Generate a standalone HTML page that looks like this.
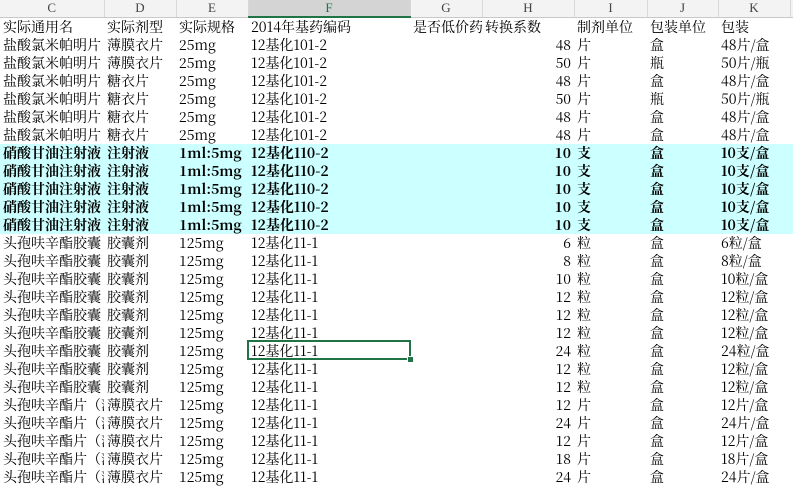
<!DOCTYPE html>
<html><head><meta charset="utf-8"><style>
body{margin:0;width:793px;height:485px;overflow:hidden;background:#fff;font-family:"Noto Serif CJK SC","WenQuanYi Zen Hei",serif;font-size:14px;color:#000}
table{border-collapse:collapse;table-layout:fixed;position:absolute;left:0;top:0;width:793px}
td{box-sizing:border-box;height:18px;padding:0 0 0 3px;white-space:nowrap;overflow:hidden;line-height:18px}
tr.h td{height:17px;background:#f3f3f3;text-align:center;font-size:13px;color:#444;border-right:1px solid #d8d8d8;border-bottom:1px solid #c8c8c8;padding:0;line-height:16px;font-family:"Liberation Serif",serif}
tr.h td.sel{background:#d4d4d4;border-bottom:2px solid #217346;color:#217346}
td.r{text-align:right;padding:0 3px 0 0}
tr.b td{background:#ccffff;font-weight:bold}
#sel{position:absolute;left:247px;top:340px;width:160px;height:16px;border:2px solid #217346}
#sel:after{content:"";position:absolute;right:-5px;bottom:-5px;width:5px;height:5px;background:#217346;border:1px solid #fff}
</style></head><body>
<table>
<colgroup><col style="width:104px"><col style="width:72px"><col style="width:72px"><col style="width:162px"><col style="width:72px"><col style="width:92px"><col style="width:73px"><col style="width:71px"><col style="width:72px"><col style="width:3px"></colgroup>
<tr class="h"><td>C</td><td>D</td><td>E</td><td class="sel">F</td><td>G</td><td>H</td><td>I</td><td>J</td><td>K</td><td></td></tr>
<tr><td>实际通用名</td><td>实际剂型</td><td>实际规格</td><td>2014年基药编码</td><td>是否低价药</td><td>转换系数</td><td>制剂单位</td><td>包装单位</td><td>包装</td><td></td></tr>
<tr><td>盐酸氯米帕明片</td><td>薄膜衣片</td><td>25mg</td><td>12基化101-2</td><td></td><td class="r">48</td><td>片</td><td>盒</td><td>48片/盒</td><td></td></tr>
<tr><td>盐酸氯米帕明片</td><td>薄膜衣片</td><td>25mg</td><td>12基化101-2</td><td></td><td class="r">50</td><td>片</td><td>瓶</td><td>50片/瓶</td><td></td></tr>
<tr><td>盐酸氯米帕明片</td><td>糖衣片</td><td>25mg</td><td>12基化101-2</td><td></td><td class="r">48</td><td>片</td><td>盒</td><td>48片/盒</td><td></td></tr>
<tr><td>盐酸氯米帕明片</td><td>糖衣片</td><td>25mg</td><td>12基化101-2</td><td></td><td class="r">50</td><td>片</td><td>瓶</td><td>50片/瓶</td><td></td></tr>
<tr><td>盐酸氯米帕明片</td><td>糖衣片</td><td>25mg</td><td>12基化101-2</td><td></td><td class="r">48</td><td>片</td><td>盒</td><td>48片/盒</td><td></td></tr>
<tr><td>盐酸氯米帕明片</td><td>糖衣片</td><td>25mg</td><td>12基化101-2</td><td></td><td class="r">48</td><td>片</td><td>盒</td><td>48片/盒</td><td></td></tr>
<tr class="b"><td>硝酸甘油注射液</td><td>注射液</td><td>1ml:5mg</td><td>12基化110-2</td><td></td><td class="r">10</td><td>支</td><td>盒</td><td>10支/盒</td><td></td></tr>
<tr class="b"><td>硝酸甘油注射液</td><td>注射液</td><td>1ml:5mg</td><td>12基化110-2</td><td></td><td class="r">10</td><td>支</td><td>盒</td><td>10支/盒</td><td></td></tr>
<tr class="b"><td>硝酸甘油注射液</td><td>注射液</td><td>1ml:5mg</td><td>12基化110-2</td><td></td><td class="r">10</td><td>支</td><td>盒</td><td>10支/盒</td><td></td></tr>
<tr class="b"><td>硝酸甘油注射液</td><td>注射液</td><td>1ml:5mg</td><td>12基化110-2</td><td></td><td class="r">10</td><td>支</td><td>盒</td><td>10支/盒</td><td></td></tr>
<tr class="b"><td>硝酸甘油注射液</td><td>注射液</td><td>1ml:5mg</td><td>12基化110-2</td><td></td><td class="r">10</td><td>支</td><td>盒</td><td>10支/盒</td><td></td></tr>
<tr><td>头孢呋辛酯胶囊</td><td>胶囊剂</td><td>125mg</td><td>12基化11-1</td><td></td><td class="r">6</td><td>粒</td><td>盒</td><td>6粒/盒</td><td></td></tr>
<tr><td>头孢呋辛酯胶囊</td><td>胶囊剂</td><td>125mg</td><td>12基化11-1</td><td></td><td class="r">8</td><td>粒</td><td>盒</td><td>8粒/盒</td><td></td></tr>
<tr><td>头孢呋辛酯胶囊</td><td>胶囊剂</td><td>125mg</td><td>12基化11-1</td><td></td><td class="r">10</td><td>粒</td><td>盒</td><td>10粒/盒</td><td></td></tr>
<tr><td>头孢呋辛酯胶囊</td><td>胶囊剂</td><td>125mg</td><td>12基化11-1</td><td></td><td class="r">12</td><td>粒</td><td>盒</td><td>12粒/盒</td><td></td></tr>
<tr><td>头孢呋辛酯胶囊</td><td>胶囊剂</td><td>125mg</td><td>12基化11-1</td><td></td><td class="r">12</td><td>粒</td><td>盒</td><td>12粒/盒</td><td></td></tr>
<tr><td>头孢呋辛酯胶囊</td><td>胶囊剂</td><td>125mg</td><td>12基化11-1</td><td></td><td class="r">12</td><td>粒</td><td>盒</td><td>12粒/盒</td><td></td></tr>
<tr><td>头孢呋辛酯胶囊</td><td>胶囊剂</td><td>125mg</td><td>12基化11-1</td><td></td><td class="r">24</td><td>粒</td><td>盒</td><td>24粒/盒</td><td></td></tr>
<tr><td>头孢呋辛酯胶囊</td><td>胶囊剂</td><td>125mg</td><td>12基化11-1</td><td></td><td class="r">12</td><td>粒</td><td>盒</td><td>12粒/盒</td><td></td></tr>
<tr><td>头孢呋辛酯胶囊</td><td>胶囊剂</td><td>125mg</td><td>12基化11-1</td><td></td><td class="r">12</td><td>粒</td><td>盒</td><td>12粒/盒</td><td></td></tr>
<tr><td>头孢呋辛酯片（薄</td><td>薄膜衣片</td><td>125mg</td><td>12基化11-1</td><td></td><td class="r">12</td><td>片</td><td>盒</td><td>12片/盒</td><td></td></tr>
<tr><td>头孢呋辛酯片（薄</td><td>薄膜衣片</td><td>125mg</td><td>12基化11-1</td><td></td><td class="r">24</td><td>片</td><td>盒</td><td>24片/盒</td><td></td></tr>
<tr><td>头孢呋辛酯片（薄</td><td>薄膜衣片</td><td>125mg</td><td>12基化11-1</td><td></td><td class="r">12</td><td>片</td><td>盒</td><td>12片/盒</td><td></td></tr>
<tr><td>头孢呋辛酯片（薄</td><td>薄膜衣片</td><td>125mg</td><td>12基化11-1</td><td></td><td class="r">18</td><td>片</td><td>盒</td><td>18片/盒</td><td></td></tr>
<tr><td>头孢呋辛酯片（薄</td><td>薄膜衣片</td><td>125mg</td><td>12基化11-1</td><td></td><td class="r">24</td><td>片</td><td>盒</td><td>24片/盒</td><td></td></tr>
</table>
<div id="sel"></div>
</body></html>
